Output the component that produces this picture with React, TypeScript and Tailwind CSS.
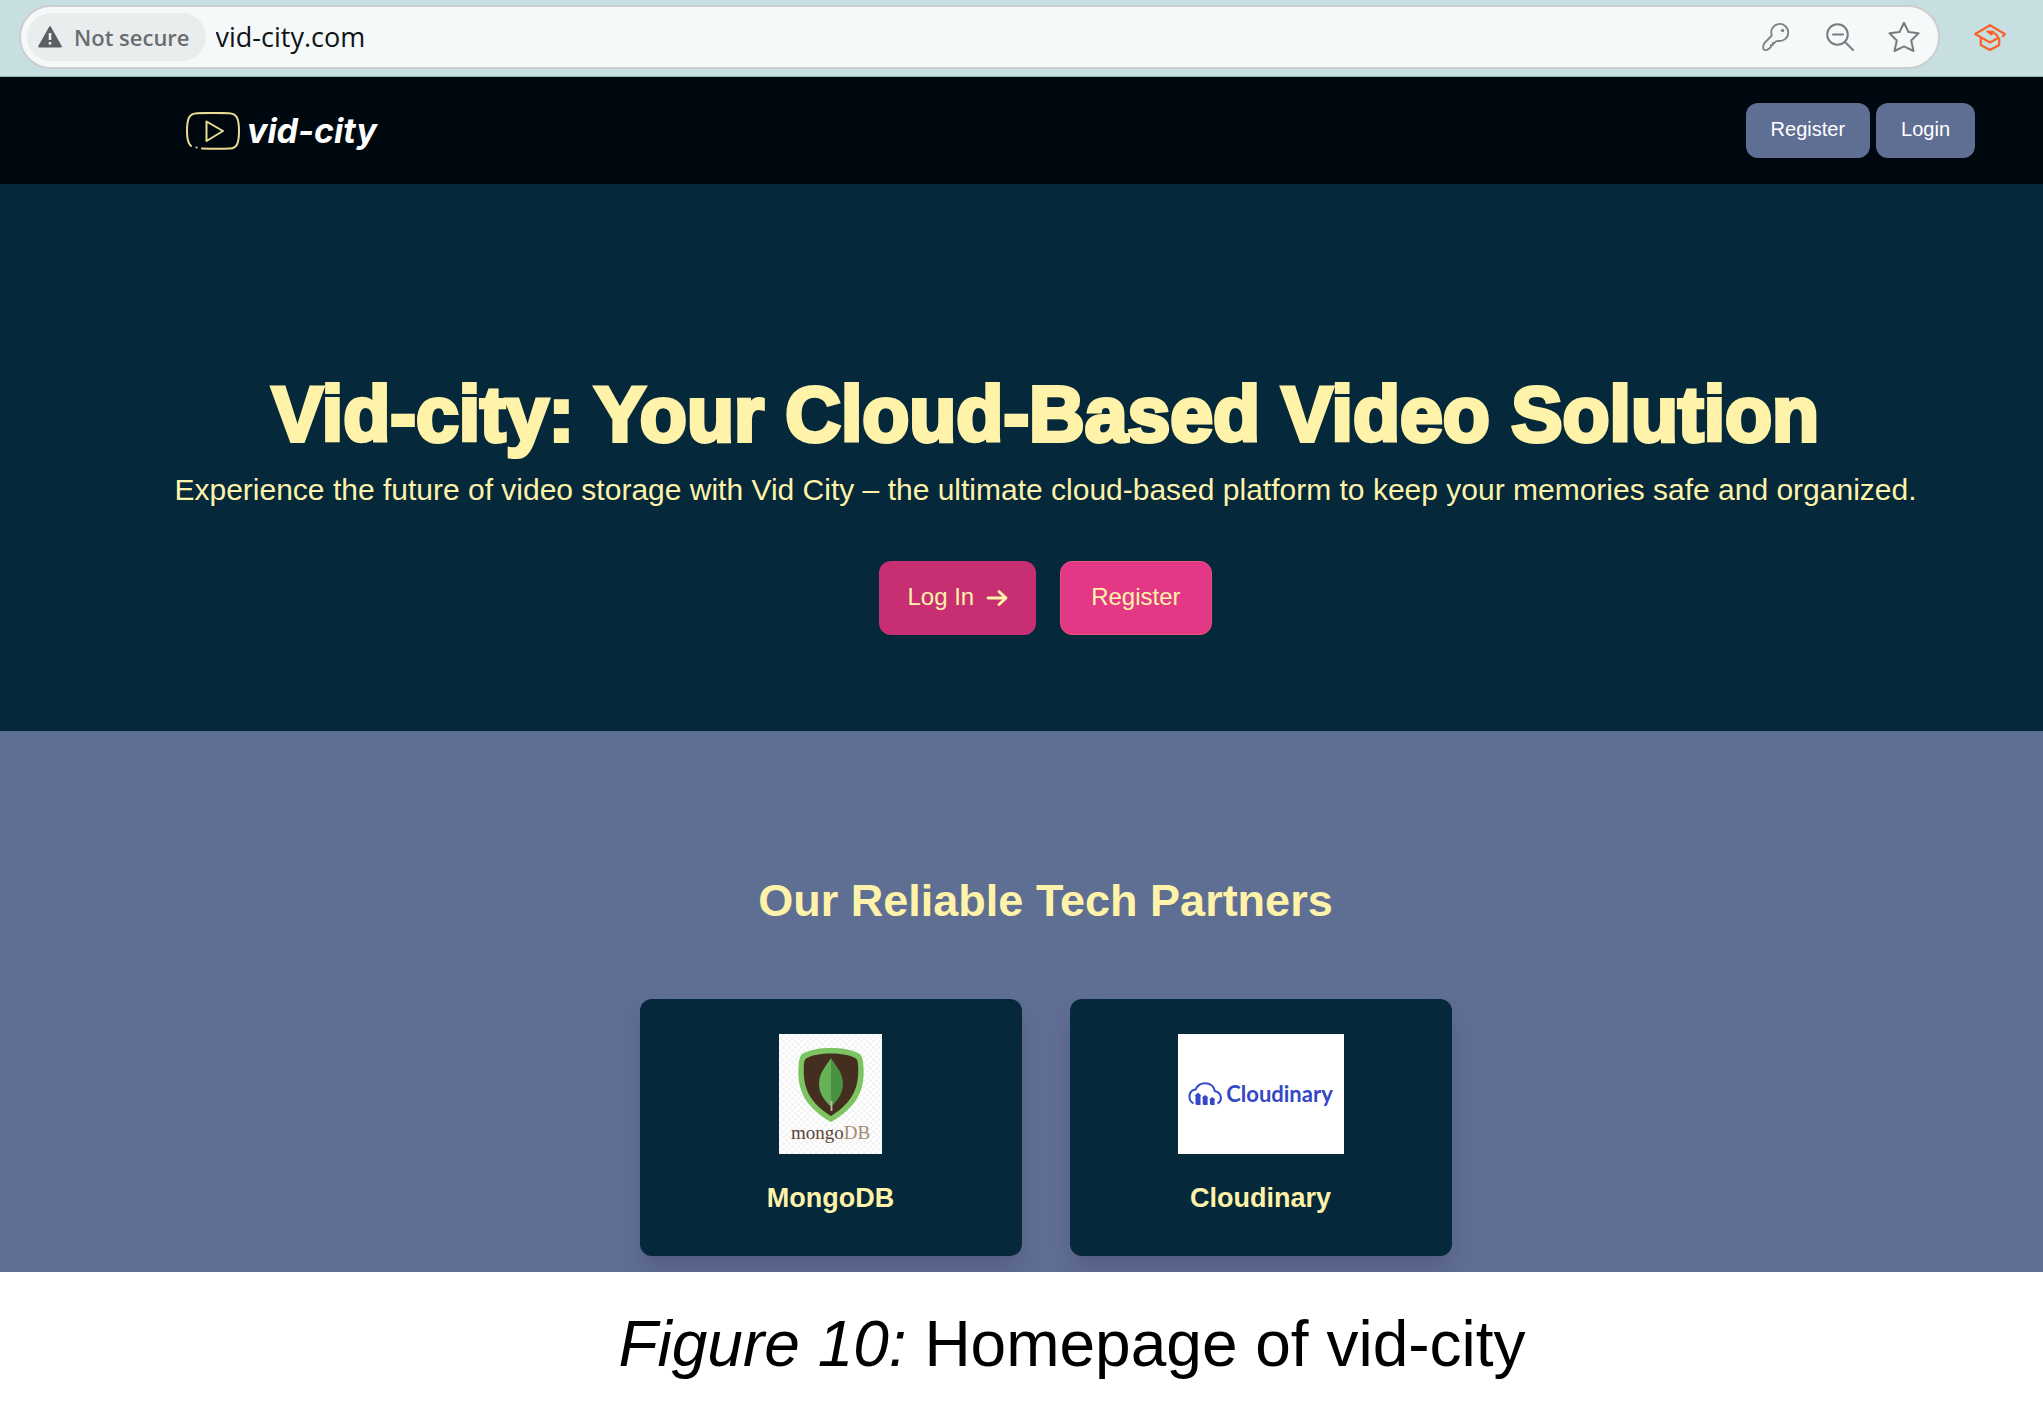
import type { ReactNode } from "react";

function WarningIcon() {
  return (
    <svg viewBox="0 0 24 22" className="h-[22px] w-6" aria-hidden="true">
      <path d="M12 1.2 22.8 20.4H1.2Z" fill="#5c5f61" stroke="#5c5f61" strokeWidth="2" strokeLinejoin="round" />
      <path d="M12 7v7" stroke="#e9edee" strokeWidth="2.6" />
      <path d="M12 16v2.6" stroke="#e9edee" strokeWidth="2.6" />
    </svg>
  );
}

function KeyIcon() {
  return (
    <svg viewBox="0 0 32 32" className="size-8" fill="none" stroke="#7f8283" strokeWidth="1.8" strokeLinejoin="round" aria-hidden="true">
      <path d="M11.800 14.500A8.500 8.500 0 1 1 18 19.800L15.800 20.500 14.500 22H12.800V24.200H10.800V26.200L8.500 28Q7 29.300 4.500 29Q2.500 28.500 3.500 24.500Q3.500 23.300 4.500 22Z" />
      <circle cx="22.500" cy="9.500" r="1.700" fill="#7f8283" stroke="none" />
    </svg>
  );
}

function ZoomOutIcon() {
  return (
    <svg viewBox="0 0 32 32" className="size-8" fill="none" stroke="#7a7d7e" strokeWidth="2" strokeLinecap="round" aria-hidden="true">
      <circle cx="13.500" cy="13.500" r="10.300" />
      <path d="M9 13.500h10M21 21l8 8" />
    </svg>
  );
}

function StarIcon() {
  return (
    <svg viewBox="0 0 32 32" className="size-8" fill="none" stroke="#7a7d7e" strokeWidth="2" strokeLinejoin="round" aria-hidden="true">
      <path d="M16 1.800 20.500 11 30.500 12.300 23.200 19.500 25.500 30 16 25.300 6.500 30 8.800 19.500 1.500 12.300 11.500 11Z" />
    </svg>
  );
}

function ScholarIcon() {
  return (
    <svg viewBox="0 0 32 32" className="size-8" fill="none" stroke="#f9622b" strokeWidth="2.200" strokeLinejoin="round" strokeLinecap="round" aria-hidden="true">
      <path d="M29 15.200 30.800 13 16 4.200 1.200 13 16 21.500 24 17C23.500 14.500 22 12.800 19 11.800" />
      <path d="M13 10.300 19.500 10.500 17.500 13.800Z" fill="#f9622b" strokeWidth="1.500" />
      <path d="M6.800 17.500V24L16 29l9.200-5v-6.500" />
    </svg>
  );
}

function PlayLogo() {
  return (
    <svg viewBox="0 0 54 38" className="h-[38px] w-[54px]" fill="none" stroke="#e9dc93" strokeWidth="2" strokeLinecap="round" strokeLinejoin="round" aria-hidden="true">
      <path d="M5 34C2.500 32 1 27 1 19 1 6 3.500 1.500 11 1.200 21 .8 33 .8 43 1.200 50.500 1.500 53 6 53 19s-2.500 17.300-9 17.500c-9 .4-19 .3-28 .1" />
      <path d="M10.500 35.600h.1" />
      <path d="M20.500 9.500 37 19 20.500 29Z" />
    </svg>
  );
}

function ArrowIcon() {
  return (
    <svg viewBox="0 0 22 18" className="mt-0.5 h-[18px] w-[22px]" fill="none" stroke="currentColor" strokeWidth="2.800" strokeLinecap="round" strokeLinejoin="round" aria-hidden="true">
      <path d="M2 9h18M13 2.500 20 9l-7 6.500" />
    </svg>
  );
}

function MongoLogo() {
  return (
    <div className="flex h-[120px] w-[103px] flex-col items-center bg-white bg-[repeating-conic-gradient(#f4f4f4_0_25%,#ffffff_0_50%)] bg-[length:6px_6px] pt-3.5">
      <svg viewBox="0 0 66 74" className="h-[74px] w-[66px] shrink-0" aria-hidden="true">
        <path d="M33 0C45 0 55 2 61 5.500 64 7.500 65 11 65.500 19 67 42 59 59 33 74 7 59-1 42 .5 19 1 11 2 7.500 5 5.500 11 2 21 0 33 0Z" fill="#7dc462" />
        <path d="M33 5.500C43 5.500 52 7 57 10c2.500 1.500 3 3 3.200 10C61 40 54 55 33 68 12 55 5 40 5.800 20 6 13 6.500 11.500 9 10 14 7 23 5.500 33 5.500Z" fill="#432e20" />
        <path d="M33 10C29 17 21 24 21 36c0 9 5 16 11.300 22L33 58Z" fill="#66b155" />
        <path d="M33 10c4 7 12 14 12 26 0 9-5 16-11.300 22L33 58Z" fill="#489244" />
        <path d="M33.500 53v10" stroke="#c4b9a5" strokeWidth="1.800" />
      </svg>
      <span className="mt-px font-['Liberation_Serif',serif] text-[19px] leading-5 text-[#5c463a]">
        mongo<span className="text-[#a58d70]">DB</span>
      </span>
    </div>
  );
}

function CloudinaryLogo() {
  return (
    <div className="flex h-[120px] w-[166px] items-center justify-center gap-1 bg-white text-[#3448c5]">
      <svg viewBox="0 0 34 24" className="h-6 w-[34px]" aria-hidden="true">
        <path d="M5.500 21.500C-.5 18 .2 8.500 7.500 7.500 9.500 3 13 1.200 17 1.200c5 0 9 3 10 8 6.500.8 8 9.500 2.500 12.300" fill="none" stroke="currentColor" strokeWidth="2" />
        <path d="M6.500 13.500 10 10.800l3.500 2.700h-1V23h-4L7.500 22v-8.500ZM13.800 15.500l3.300-2.500 3.500 2.500h-1V23h-4l-.9-1v-6.500ZM21 17.500l3.300-2.500 3.300 2.500h-1V23h-3.800l-.8-1v-4.500Z" fill="currentColor" />
      </svg>
      <span className="font-['Lato',sans-serif] text-[22px] leading-7 font-bold">Cloudinary</span>
    </div>
  );
}

function IconButton({ label, children }: { label: string; children: ReactNode }) {
  return (
    <button type="button" aria-label={label} className="shrink-0">
      {children}
    </button>
  );
}

function PartnerCard({ name, logo }: { name: string; logo: ReactNode }) {
  return (
    <li className="flex w-[382px] flex-col items-center rounded-xl bg-[#05283b] px-9 pt-[35px] pb-10 shadow-[0_15px_22px_-4px_rgba(70,60,100,0.35)]">
      {logo}
      <h3 className="mt-[26px] text-[27px] leading-9 font-bold">{name}</h3>
    </li>
  );
}

export default function App() {
  return (
    <div className="min-h-screen bg-white font-['Liberation_Sans',Arial,sans-serif]">
      <div className="flex items-center border-b border-[#8fb5b2] bg-[#c8dfe2] pt-[5px] pr-[37px] pb-[7px] pl-[19px]">
        <div className="mr-[34px] flex h-16 grow items-center rounded-full border-2 border-[#cbcdce] bg-[#f5f9fa] pr-[18px] pl-1.5">
          <button type="button" className="flex h-12 shrink-0 items-center gap-3 rounded-full bg-[#e9edee] pr-4 pl-[11px] font-['Open_Sans',sans-serif] text-[22px] font-semibold text-[#6a6d6f]">
            <WarningIcon />
            Not secure
          </button>
          <input
            aria-label="Address"
            defaultValue="vid-city.com"
            className="ml-2.5 min-w-0 grow bg-transparent font-['Open_Sans',sans-serif] text-[27px] text-[#111315] outline-none"
          />
          <div className="flex items-center gap-8">
            <IconButton label="Passwords"><KeyIcon /></IconButton>
            <IconButton label="Zoom out"><ZoomOutIcon /></IconButton>
            <IconButton label="Bookmark"><StarIcon /></IconButton>
          </div>
        </div>
        <IconButton label="Scholar extension"><ScholarIcon /></IconButton>
      </div>

      <header className="flex items-center justify-between bg-[#00080f] py-[26px] pr-[68px] pl-[186px]">
        <a href="#home" className="flex items-center gap-[7px] text-white">
          <PlayLogo />
          <span className="font-['Inter',sans-serif] text-[34px] leading-[55px] font-bold italic">vid-city</span>
        </a>
        <nav className="flex gap-1.5">
          <a href="#register" className="rounded-xl bg-[#5f6e93] px-[25px] pt-[11px] pb-[13px] text-xl leading-[31px] text-white">Register</a>
          <a href="#login" className="rounded-xl bg-[#5f6e93] px-[25px] pt-[11px] pb-[13px] text-xl leading-[31px] text-white">Login</a>
        </nav>
      </header>

      <main className="text-[#fff3a9]">
        <section className="flex flex-col items-center bg-[#05283b] pt-[190px] pb-24 pl-12 text-center">
          <h1 className="text-[77px] leading-[80px] font-bold [-webkit-text-stroke:4px_#fff3a9]">
            Vid-city: Your Cloud-Based Video Solution
          </h1>
          <p className="mt-4 text-3xl leading-10">
            Experience the future of video storage with Vid City – the ultimate cloud-based platform to keep your memories safe and organized.
          </p>
          <div className="mt-[51px] flex gap-6 text-2xl leading-9">
            <a href="#login" className="flex items-center gap-3 rounded-xl bg-[#c72f72] px-7 pt-[18px] pb-5">
              Log In
              <ArrowIcon />
            </a>
            <a href="#register" className="rounded-xl border border-[#e8527c] bg-[#e33885] px-[30px] pt-[17px] pb-[19px]">Register</a>
          </div>
        </section>

        <section className="flex flex-col items-center overflow-hidden bg-[#5f6e93] pt-36 pb-4 pl-12">
          <h2 className="text-[45px] leading-[52px] font-bold">Our Reliable Tech Partners</h2>
          <ul className="mt-[72px] flex gap-12">
            <PartnerCard name="MongoDB" logo={<MongoLogo />} />
            <PartnerCard name="Cloudinary" logo={<CloudinaryLogo />} />
          </ul>
        </section>
      </main>

      <p className="bg-white pt-9 pl-[101px] text-center text-[64px] leading-[72px] text-black">
        <em>Figure 10:</em> Homepage of vid-city
      </p>
    </div>
  );
}
